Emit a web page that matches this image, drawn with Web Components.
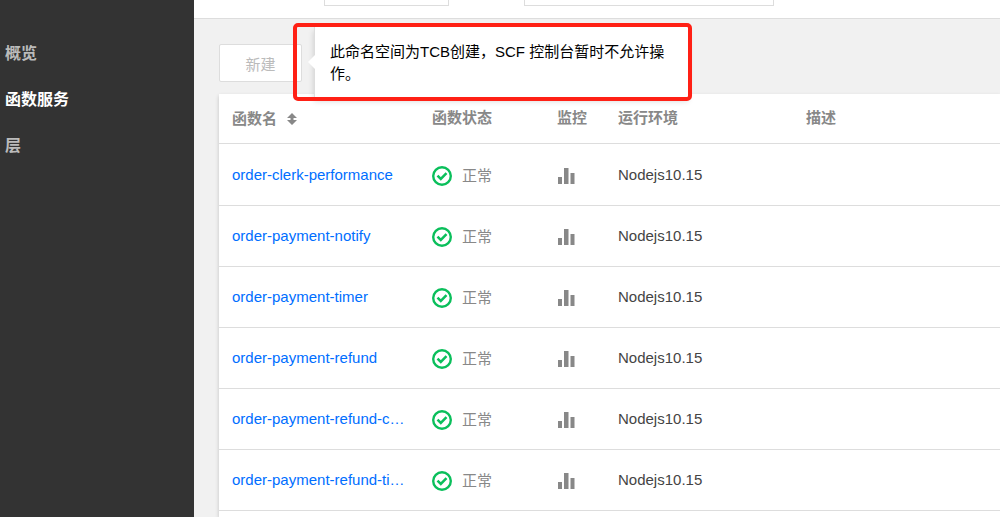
<!DOCTYPE html>
<html lang="zh-CN">
<head>
<meta charset="utf-8">
<meta name="viewport" content="width=device-width, initial-scale=1">
<title>函数服务</title>
<style>
html, body { height: 100%; }
body { margin: 0; overflow: hidden; background: #f1f1f1; color: #444; font: 15px/22px "Liberation Sans", "Noto Sans CJK SC", sans-serif; }
</style>
</head>
<body>
<scf-console></scf-console>
<script>
const define = (name, html, setup) => customElements.define(name, class extends HTMLElement {
  connectedCallback() {
    if (this.shadowRoot) return;
    const t = document.createElement('template');
    t.innerHTML = html;
    this.attachShadow({ mode: 'open' }).append(t.content.cloneNode(true));
    if (setup) setup(this, this.shadowRoot);
  }
});

define('scf-nav-item', `
<style>
:host { display: block; }
a { display: block; padding: 12px 5px; color: #bbb; font-size: 16px; font-weight: bold; line-height: 22px; text-decoration: none; }
:host([active]) a { color: #fff; }
</style>
<a href="#"><slot></slot></a>`);

define('scf-sidebar', `
<style>
:host { display: block; flex: 0 0 194px; background: #333; }
nav { padding-top: 31px; }
</style>
<nav aria-label="导航"><slot></slot></nav>`);

define('scf-topbar', `
<style>
:host { display: flex; box-sizing: border-box; height: 19px; padding: 0 24px 12px 130px; gap: 75px; align-items: flex-end; overflow: hidden; background: #fff; border-bottom: 1px solid #ddd; }
select { appearance: none; box-sizing: border-box; flex: none; height: 30px; width: 125px; border: 1px solid #ddd; border-radius: 0; background: #fff; }
.namespace { width: 250px; }
</style>
<select aria-label="地域"></select><select class="namespace" aria-label="命名空间"></select>`);

define('scf-tooltip', `
<style>
:host { position: absolute; left: 74px; top: -21px; z-index: 1; width: 399px; max-width: calc(100vw - 320px); box-sizing: border-box; padding: 4px 4px 4px 21px; }
.bubble { position: relative; padding: 14px 16px 12px 15px; background: #fff; border-left: 1px solid #ddd; box-shadow: 0 4px 6px rgba(0,0,0,.16); color: #000; }
.bubble::before { content: ""; position: absolute; left: -7px; top: 28px; border: 7px solid transparent; border-left: 0; border-right-color: #fff; }
.frame { position: absolute; inset: 0; border: 4px solid #ff2015; border-radius: 5px; pointer-events: none; }
</style>
<div class="bubble" role="tooltip"><slot></slot></div><div class="frame"></div>`);

define('scf-actions', `
<style>
:host { display: flex; position: relative; }
button { width: 83px; height: 38px; padding: 4px 0 0; border: 1px solid #ddd; border-radius: 2px; background: #fff; color: #bbb; font: inherit; }
</style>
<button type="button" disabled>新建</button><slot></slot>`);

define('scf-status', `
<style>
:host { display: flex; align-items: center; gap: 10px; padding-top: 2px; color: #888; }
svg { display: block; flex: none; }
</style>
<svg width="20" height="20" viewBox="0 0 20 20" fill="none" stroke="#0abf5b" aria-hidden="true"><circle cx="10" cy="10" r="8.8" stroke-width="2.4"/><path d="M5.500 9.700l3.300 3.300 5.700-5.800" stroke-width="2.500"/></svg>
<span><slot></slot></span>`);

define('scf-monitor', `
<style>
:host { display: block; padding-top: 2px; }
button { display: block; padding: 0; border: 0; background: none; }
svg { display: block; }
</style>
<button type="button" aria-label="监控"><svg width="18" height="18" viewBox="0 0 18 18" fill="#888"><path d="M1 10h4v7H1zM7 1h4.500v16H7zM13.500 6h4v11h-4z"/></svg></button>`);

define('scf-table', `
<style>
:host { display: block; flex: 1 0 auto; background: #fff; box-shadow: 0 2px 4px rgba(0,0,0,.2); }
table { width: 100%; border-collapse: separate; border-spacing: 0; table-layout: fixed; }
th, td { box-sizing: border-box; padding: 0 12px 0 13px; text-align: left; border-bottom: 1px solid #ddd; }
th { height: 50px; padding-bottom: 2px; color: #888; font-weight: bold; }
td { height: 61px; }
tbody tr:first-child td { height: 62px; }
.name { width: 200px; } .state { width: 125px; } .mon { width: 61px; } .env { width: 188px; }
.sort { display: flex; align-items: center; gap: 10px; padding: 2px 0 0; border: 0; background: none; color: inherit; font: inherit; }
a { display: block; overflow: hidden; text-overflow: ellipsis; white-space: nowrap; color: #006eff; text-decoration: none; }
</style>
<table>
<colgroup><col class="name"><col class="state"><col class="mon"><col class="env"><col></colgroup>
<thead><tr><th><button class="sort" type="button">函数名<svg width="10" height="12" viewBox="0 0 10 12" fill="#888" aria-hidden="true"><path d="M5 0l5 5H6.500v2H10l-5 5-5-5h3.500V5H0z"/></svg></button></th><th>函数状态</th><th>监控</th><th>运行环境</th><th>描述</th></tr></thead>
<tbody></tbody>
</table>`, (host, root) => {
  const names = ['order-clerk-performance', 'order-payment-notify', 'order-payment-timer', 'order-payment-refund', 'order-payment-refund-c…', 'order-payment-refund-ti…'];
  root.querySelector('tbody').innerHTML = names.map(n =>
    `<tr><td><a href="#">${n}</a></td><td><scf-status>正常</scf-status></td><td><scf-monitor></scf-monitor></td><td>Nodejs10.15</td><td></td></tr>`).join('');
});

define('scf-console', `
<style>
:host { display: flex; min-height: 100%; }
main { flex: 1; min-width: 0; display: flex; flex-direction: column; }
.content { flex: 1; display: flex; flex-direction: column; gap: 12px; padding: 25px 0 0 25px; }
</style>
<scf-sidebar><scf-nav-item>概览</scf-nav-item><scf-nav-item active>函数服务</scf-nav-item><scf-nav-item>层</scf-nav-item></scf-sidebar>
<main>
<scf-topbar></scf-topbar>
<div class="content">
<scf-actions><scf-tooltip>此命名空间为TCB创建，SCF 控制台暂时不允许操作。</scf-tooltip></scf-actions>
<scf-table></scf-table>
</div>
</main>`);
</script>
</body>
</html>
